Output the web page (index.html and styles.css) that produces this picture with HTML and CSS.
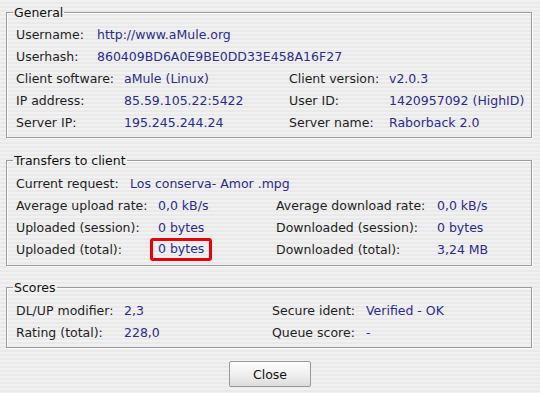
FILE: index.html
```html
<!DOCTYPE html>
<html>
<head>
<meta charset="utf-8">
<link rel="stylesheet" href="styles.css">
</head>
<body>
<div class="dialog">
  <fieldset class="group general">
    <legend>General</legend>
    <div class="grid g-wide">
      <span class="lbl">Username:</span><span class="val">http://www.aMule.org</span>
      <span class="lbl">Userhash:</span><span class="val">860409BD6A0E9BE0DD33E458A16F27</span>
    </div>
    <div class="grid g-four">
      <span class="lbl">Client software:</span><span class="val">aMule (Linux)</span>
      <span class="lbl">Client version:</span><span class="val">v2.0.3</span>
      <span class="lbl">IP address:</span><span class="val">85.59.105.22:5422</span>
      <span class="lbl">User ID:</span><span class="val">1420957092 (HighID)</span>
      <span class="lbl">Server IP:</span><span class="val">195.245.244.24</span>
      <span class="lbl">Server name:</span><span class="val">Raborback 2.0</span>
    </div>
  </fieldset>

  <fieldset class="group transfers">
    <legend>Transfers to client</legend>
    <div class="grid t-wide">
      <span class="lbl">Current request:</span><span class="val">Los conserva- Amor .mpg</span>
    </div>
    <div class="grid t-four">
      <span class="lbl">Average upload rate:</span><span class="val">0,0 kB/s</span>
      <span class="lbl">Average download rate:</span><span class="val">0,0 kB/s</span>
      <span class="lbl">Uploaded (session):</span><span class="val">0 bytes</span>
      <span class="lbl">Downloaded (session):</span><span class="val">0 bytes</span>
      <span class="lbl">Uploaded (total):</span><span class="val"><span class="mark">0 bytes</span></span>
      <span class="lbl">Downloaded (total):</span><span class="val">3,24 MB</span>
    </div>
  </fieldset>

  <fieldset class="group scores">
    <legend>Scores</legend>
    <div class="grid s-four">
      <span class="lbl">DL/UP modifier:</span><span class="val">2,3</span>
      <span class="lbl">Secure ident:</span><span class="val">Verified - OK</span>
      <span class="lbl">Rating (total):</span><span class="val">228,0</span>
      <span class="lbl">Queue score:</span><span class="val">-</span>
    </div>
  </fieldset>

  <div class="buttons">
    <button class="btn">Close</button>
  </div>
</div>
</body>
</html>
```

FILE: styles.css
```css
html, body {
  margin: 0;
  padding: 0;
}
body {
  width: 540px;
  height: 393px;
  overflow: hidden;
  font-family: "DejaVu Sans", "Liberation Sans", sans-serif;
  font-size: 12.5px;
  color: #1e1e1e;
  background: repeating-linear-gradient(to bottom, #f1f1f1 0px, #f1f1f1 2px, #e9e9e9 2px, #e9e9e9 4px);
}
.dialog {
  padding: 5px 8px 0 6px;
  display: flex;
  flex-direction: column;
}
.group {
  margin: 0;
  border: 1px solid #9c9c9c;
  box-shadow: inset 1px 1px 0 #fafafa, 1px 1px 0 #fafafa;
  padding: 3px 0 4px 9px;
  min-width: 0;
}
.group legend {
  padding: 0 1px;
  margin-left: -3px;
  line-height: 15px;
  color: #111;
}
.transfers {
  margin-top: 15px;
  padding-top: 4px;
  padding-bottom: 5px;
}
.scores {
  margin-top: 14px;
  padding-top: 4px;
  padding-bottom: 4px;
}
.grid {
  display: grid;
  grid-auto-rows: 22px;
  align-items: center;
  white-space: nowrap;
}
.g-wide { grid-template-columns: 81px auto; }
.g-four { grid-template-columns: 108px 165px 100px auto; }
.t-wide { grid-template-columns: 114px auto; }
.t-four { grid-template-columns: 142px 118px 161px auto; }
.s-four { grid-template-columns: 108px 148px 94px auto; }
.val {
  color: #2b2b8c;
}
.mark {
  display: inline-block;
  margin-left: -8px;
  padding: 1px 5px 2px 5px;
  border: 3px solid #e8000b;
  border-radius: 3px;
  line-height: 14px;
}
.buttons {
  display: flex;
  justify-content: center;
  padding-top: 13px;
  padding-left: 2px;
}
.btn {
  width: 82px;
  height: 26px;
  font-family: "DejaVu Sans", "Liberation Sans", sans-serif;
  font-size: 12.5px;
  color: #111;
  border: 1px solid #9a9a9a;
  border-radius: 2px;
  background: linear-gradient(to bottom, #fdfdfd 0%, #eeeeee 55%, #dcdcdc 100%);
  padding: 0;
}
```
